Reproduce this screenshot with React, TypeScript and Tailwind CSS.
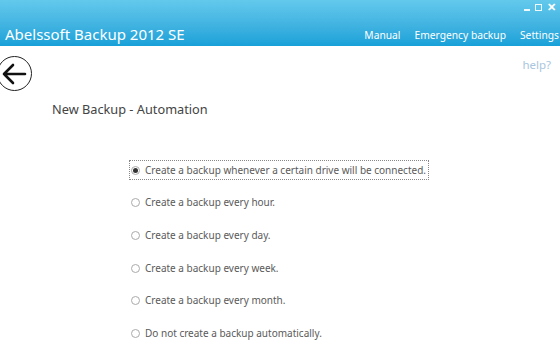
import React from "react";

const options = [
  "Create a backup whenever a certain drive will be connected.",
  "Create a backup every hour.",
  "Create a backup every day.",
  "Create a backup every week.",
  "Create a backup every month.",
  "Do not create a backup automatically.",
];

export default function App() {
  return (
    <div
      className="w-[560px] h-[358px] bg-white overflow-hidden relative"
      style={{ fontFamily: '"Noto Sans", "Open Sans", sans-serif' }}
    >
      <div className="h-[46px] bg-gradient-to-b from-[#63c9ec] to-[#16a1d8] relative flex items-end pb-[1px]">
        <div className="absolute right-[4px] top-[1px] flex items-center gap-[5px] text-white text-[11px] leading-none">
          <span className="w-[6px] h-[2px] bg-white mt-[6px] opacity-90" />
          <span className="w-[7px] h-[7px] border border-white opacity-90 mt-[1px]" />
          <span className="text-[11px] font-bold">✕</span>
        </div>
        <div className="flex-1 pl-[5px] text-white text-[15px] leading-[22px]">
          Abelssoft Backup 2012 SE
        </div>
        <div className="flex gap-[14px] text-white text-[10.25px] leading-[18px] pb-[1px] pr-[1px]">
          <span>Manual</span>
          <span>Emergency backup</span>
          <span>Settings</span>
        </div>
      </div>
      <div className="relative">
        <div className="absolute left-[-3px] top-[10px] w-[35px] h-[35px] rounded-full border-[1.5px] border-[#222] flex items-center justify-center">
          <svg width="26" height="22" viewBox="0 0 26 22" className="ml-[-2px]">
            <path d="M24 11 H3 M12 2 L3 11 L12 20" fill="none" stroke="#111" strokeWidth="2.6" strokeLinecap="round" strokeLinejoin="round" />
          </svg>
        </div>
        <div className="flex justify-end pr-[9px] pt-[10px] text-[11.5px] text-[#a9c6de]">help?</div>
        <div className="pl-[52px] pt-[27px] text-[12.75px] text-[#444]">New Backup - Automation</div>
        <div className="pl-[130px] pt-[42px] flex flex-col gap-[14.6px]">
          {options.map((o, i) => (
            <div
              key={o}
              className={`flex items-center gap-[5px] h-[18px] text-[10px] text-[#5a5a5a] w-fit pr-[2px] pl-[1px] ${
                i === 0 ? "outline outline-1 outline-dotted outline-[#888]" : ""
              }`}
            >
              <span className="w-[9px] h-[9px] rounded-full border border-[#aaa] bg-white flex items-center justify-center">
                {i === 0 && <span className="w-[5px] h-[5px] rounded-full bg-[#333]" />}
              </span>
              <span>{o}</span>
            </div>
          ))}
        </div>
      </div>
    </div>
  );
}
